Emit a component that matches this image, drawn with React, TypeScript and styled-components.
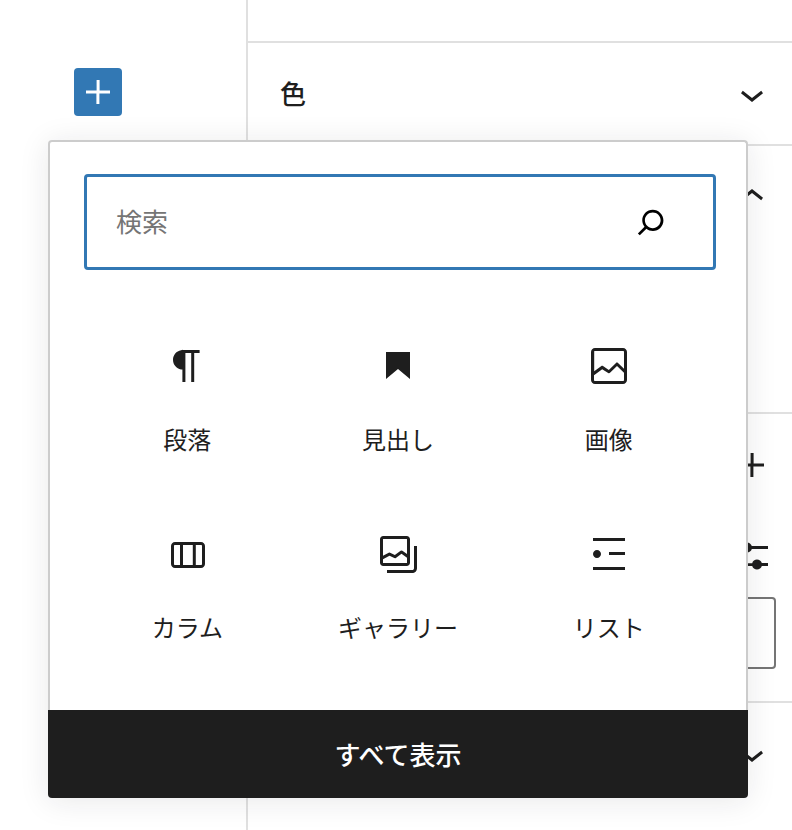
import React from "react"
import { createGlobalStyle, styled } from "styled-components"

const GlobalStyle = createGlobalStyle`
  html, body {
    margin: 0;
    padding: 0;
    background: #fff;
  }
  body {
    font-family: "Noto Sans CJK JP", "Noto Sans", sans-serif;
    color: #1e1e1e;
  }
`

const ICONS = {
  plus: "M18 11.2h-5.2V6h-1.5v5.2H6v1.5h5.2V18h1.5v-5.2H18z",
  chevronDown: "M17.5 11.6L12 16l-5.5-4.4.9-1.2L12 14l4.6-3.6z",
  chevronUp: "M6.5 12.4L12 8l5.5 4.4-.9 1.2L12 10l-4.6 3.6-.9-1.2z",
  sliders:
    "M14.5 13.8c-1.1 0-2.1.7-2.4 1.8H4V17h8.1c.3 1 1.3 1.8 2.4 1.8s2.1-.7 2.4-1.8H20v-1.5h-3.1c-.3-1-1.3-1.7-2.4-1.7zM11.9 7c-.3-1-1.3-1.8-2.4-1.8S7.4 6 7.1 7H4v1.5h3.1c.3 1 1.3 1.8 2.4 1.8s2.1-.7 2.4-1.8H20V7h-8.1z",
  search:
    "M13 5c-3.3 0-6 2.7-6 6 0 1.4.5 2.7 1.3 3.7l-3.8 3.8 1.1 1.1 3.8-3.8c1 .8 2.3 1.3 3.7 1.3 3.3 0 6-2.7 6-6S16.3 5 13 5zm0 10.5c-2.5 0-4.5-2-4.5-4.5s2-4.5 4.5-4.5 4.5 2 4.5 4.5-2 4.5-4.5 4.5z",
  paragraph:
    "M18.3 4H9.9v-.1l-.9.2c-2.3.4-4 2.4-4 4.8s1.7 4.4 4 4.8l.7.1V20h1.5V5.5h2.9V20h1.5V5.5h2.7V4z",
  heading: "M6 5h12v13.5l-6-5-6 5z",
  image:
    "M19 3H5c-1.1 0-2 .9-2 2v14c0 1.1.9 2 2 2h14c1.1 0 2-.9 2-2V5c0-1.1-.9-2-2-2zM5 4.5h14c.3 0 .5.2.5.5v8.4l-3-2.9c-.3-.3-.8-.3-1 0L11.9 14 9 12c-.3-.2-.6-.2-.8 0l-3.6 2.6V5c-.1-.3.1-.5.4-.5zm14 15H5c-.3 0-.5-.2-.5-.5v-2.4l4.1-3 3 1.9c.3.2.7.2.9-.1L16 12l3.5 3.4V19c0 .3-.2.5-.5.5z",
  columns:
    "M19 6H6c-1.1 0-2 .9-2 2v9c0 1.1.9 2 2 2h13c1.1 0 2-.9 2-2V8c0-1.1-.9-2-2-2zm-4.1 1.5v10H10v-10h4.9zM5.5 17V8c0-.3.2-.5.5-.5h2.5v10H6c-.3 0-.5-.2-.5-.5zm14 0c0 .3-.2.5-.5.5h-2.6v-10H19c.3 0 .5.2.5.5v9z",
  gallery:
    "M16.375 4.5H4.625a.125.125 0 0 0-.125.125v8.254l2.859-1.54a.75.75 0 0 1 .68-.016l2.384 1.142 2.89-2.074a.75.75 0 0 1 .874 0l2.313 1.66V4.625a.125.125 0 0 0-.125-.125zm.125 9.398-2.75-1.975-2.813 2.02a.75.75 0 0 1-.76.067l-2.444-1.17L4.5 14.583v1.792c0 .069.056.125.125.125h11.75a.125.125 0 0 0 .125-.125v-2.477zM4.625 3C3.728 3 3 3.728 3 4.625v11.75C3 17.273 3.728 18 4.625 18h11.75c.898 0 1.625-.727 1.625-1.625V4.625C18 3.728 17.273 3 16.375 3H4.625zM20 8v11c0 .69-.31 1-.999 1H6.5v1.5h12.5c1.52 0 2.5-.98 2.5-2.5V8z",
  list: "M4 4v1.5h16V4H4zm8 8.5h8V11h-8v1.5zM4 20h16v-1.5H4V20zm4-8c0-1.1-.9-2-2-2s-2 .9-2 2 .9 2 2 2 2-.9 2-2z",
}

const BLOCKS = [
  { label: "段落", icon: ICONS.paragraph },
  { label: "見出し", icon: ICONS.heading },
  { label: "画像", icon: ICONS.image },
  { label: "カラム", icon: ICONS.columns },
  { label: "ギャラリー", icon: ICONS.gallery },
  { label: "リスト", icon: ICONS.list },
]

const Icon = ({ d, size = 48 }: { d: string; size?: number }): JSX.Element => (
  <IconSvg width={size} height={size} viewBox="0 0 24 24" aria-hidden="true">
    <path d={d} fill="currentColor" fillRule="evenodd" />
  </IconSvg>
)

const App = (): JSX.Element => {
  return (
    <Page>
      <GlobalStyle />
      <Canvas>
        <AddButton type="button" aria-label="追加">
          <Icon d={ICONS.plus} />
        </AddButton>
      </Canvas>
      <Sidebar>
        <TopPanel />
        <PanelHeader>
          <PanelTitle>色</PanelTitle>
          <Icon d={ICONS.chevronDown} />
        </PanelHeader>
        <OpenPanel>
          <OpenHeader>
            <span />
            <Icon d={ICONS.chevronUp} />
          </OpenHeader>
        </OpenPanel>
        <ToolsPanel>
          <ToolRow $below={43}>
            <Icon d={ICONS.plus} />
          </ToolRow>
          <ToolRow $below={17}>
            <Icon d={ICONS.sliders} />
          </ToolRow>
          <OutlinedBox />
        </ToolsPanel>
        <LastHeader>
          <span />
          <Icon d={ICONS.chevronDown} />
        </LastHeader>
      </Sidebar>

      <Popover>
        <PopoverBody>
          <SearchBox>
            <SearchInput placeholder="検索" readOnly />
            <SearchIcon>
              <Icon d={ICONS.search} size={42} />
            </SearchIcon>
          </SearchBox>
          <BlockGrid>
            {BLOCKS.map((block) => (
              <BlockItem key={block.label}>
                <Icon d={block.icon} />
                <BlockLabel>{block.label}</BlockLabel>
              </BlockItem>
            ))}
          </BlockGrid>
        </PopoverBody>
        <BrowseAll type="button">すべて表示</BrowseAll>
      </Popover>
    </Page>
  )
}

const Page = styled.div`
  position: relative;
  width: 792px;
  height: 830px;
  overflow: hidden;
  display: flex;
  background: #fff;
`

const IconSvg = styled.svg`
  display: block;
  flex-shrink: 0;
`

const Canvas = styled.div`
  width: 246px;
  flex-shrink: 0;
  padding: 68px 0 0 74px;
  box-sizing: border-box;
`

const AddButton = styled.button`
  display: block;
  width: 48px;
  height: 48px;
  padding: 0;
  border: 0;
  border-radius: 4px;
  background: #3278b4;
  color: #fff;
`

const Sidebar = styled.div`
  flex: 1;
  display: flex;
  flex-direction: column;
  border-left: 2px solid #e0e0e0;
`

const TopPanel = styled.div`
  height: 41px;
  border-bottom: 2px solid #e0e0e0;
`

const PanelHeader = styled.div`
  height: 103px;
  flex-shrink: 0;
  box-sizing: border-box;
  display: flex;
  align-items: center;
  justify-content: space-between;
  padding: 0 16px 0 32px;
  border-bottom: 2px solid #e0e0e0;
  color: #1e1e1e;
`

const PanelTitle = styled.span`
  font-size: 26px;
  font-weight: 500;
  line-height: 36px;
  margin-top: -2px;
`

const OpenPanel = styled.div`
  height: 266px;
  border-bottom: 2px solid #e0e0e0;
`

const OpenHeader = styled(PanelHeader)`
  height: 101px;
  border-bottom: 0;
`

const ToolsPanel = styled.div`
  height: 289px;
  box-sizing: border-box;
  padding: 27px 16px 0 32px;
  border-bottom: 2px solid #e0e0e0;
  display: flex;
  flex-direction: column;
`

const ToolRow = styled.div<{ $below: number }>`
  display: flex;
  justify-content: flex-end;
  margin-bottom: ${(p) => p.$below}px;
`

const OutlinedBox = styled.div`
  height: 72px;
  box-sizing: border-box;
  border: 2px solid #757575;
  border-radius: 4px;
`

const LastHeader = styled(PanelHeader)`
  height: 101px;
  border-bottom: 0;
`

const Popover = styled.div`
  position: absolute;
  top: 140px;
  left: 48px;
  width: 700px;
  height: 658px;
  display: flex;
  flex-direction: column;
  border-radius: 4px;
  background: #fff;
  box-shadow: 0 3px 30px rgba(25, 30, 35, 0.1);
`

const PopoverBody = styled.div`
  flex: 1;
  box-sizing: border-box;
  padding: 32px 30px 0 34px;
  border: 2px solid #cccccc;
  border-bottom: 0;
  border-radius: 4px 4px 0 0;
`

const SearchBox = styled.div`
  height: 96px;
  box-sizing: border-box;
  display: flex;
  align-items: center;
  padding: 0 41px 0 29px;
  border: 3px solid #3278b4;
  border-radius: 4px;
`

const SearchInput = styled.input`
  flex: 1;
  min-width: 0;
  height: 40px;
  margin-top: -4px;
  padding: 0;
  border: 0;
  outline: 0;
  background: transparent;
  font-family: inherit;
  font-size: 26px;
  color: #1e1e1e;

  &::placeholder {
    color: #757575;
    opacity: 1;
  }
`

const SearchIcon = styled.span`
  color: #000;
`

const BlockGrid = styled.div`
  display: grid;
  grid-template-columns: repeat(3, 1fr);
  row-gap: 73px;
  margin: 72px 2px 0 -2px;
`

const BlockItem = styled.div`
  display: flex;
  flex-direction: column;
  align-items: center;
  gap: 31px;
  color: #1e1e1e;
`

const BlockLabel = styled.span`
  font-size: 24px;
  line-height: 36px;
`

const BrowseAll = styled.button`
  height: 88px;
  flex-shrink: 0;
  border: 0;
  padding: 0 0 2px;
  border-radius: 0 0 4px 4px;
  background: #1e1e1e;
  color: #fff;
  font-family: inherit;
  font-size: 26px;
  font-weight: 500;
`

export default App
